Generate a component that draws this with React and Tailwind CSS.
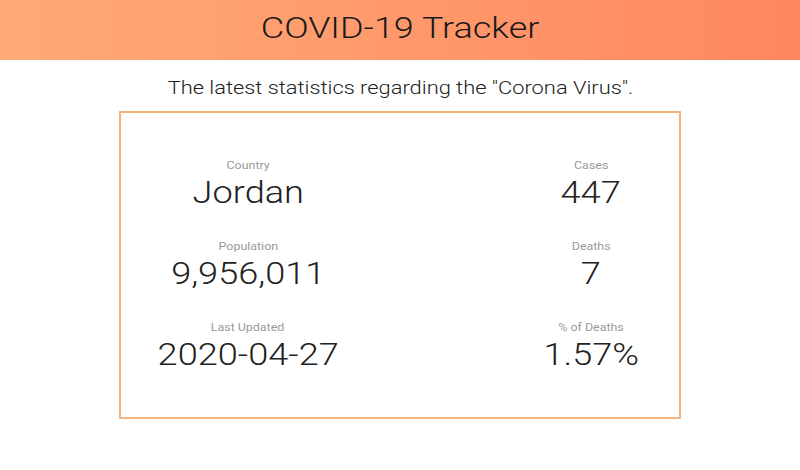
import React from "react";

const left = [
  { label: "Country", value: "Jordan" },
  { label: "Population", value: "9,956,011" },
  { label: "Last Updated", value: "2020-04-27" },
];

const right = [
  { label: "Cases", value: "447" },
  { label: "Deaths", value: "7" },
  { label: "% of Deaths", value: "1.57%" },
];

// the screenshot is a bit wider than the font, hence the scale-x
const Stat = ({ label, value }) => (
  <div className="flex flex-col items-center">
    <span className="text-[11px] leading-[14px] text-[#9a9a9a] scale-x-[1.13]">{label}</span>
    <span className="text-[32px] leading-[38px] font-light text-[#222] scale-x-[1.13] whitespace-nowrap">
      {value}
    </span>
  </div>
);

export default function App() {
  return (
    <div className="min-h-[470px] bg-white font-['Roboto',sans-serif] overflow-hidden">
      <header className="h-[60px] pb-[5px] flex items-center justify-center bg-gradient-to-r from-[#ffaa78] to-[#ff8760]">
        <h1 className="text-[30px] font-light text-[#1a1a1a] scale-x-[1.2]">COVID-19 Tracker</h1>
      </header>
      <div className="mt-[14px] flex justify-center">
        <p className="text-[19px] font-light text-[#222] scale-x-[1.15]">
          The latest statistics regarding the "Corona Virus".
        </p>
      </div>
      <div className="mx-auto mt-[8px] w-[562px] h-[308px] border-2 border-[#f5b37e] flex justify-between pl-[37px] pr-[38px] pt-[46px]">
        <div className="w-[180px] flex flex-col gap-[29px]">
          {left.map((s) => (
            <Stat key={s.label} {...s} />
          ))}
        </div>
        <div className="w-[100px] flex flex-col gap-[29px]">
          {right.map((s) => (
            <Stat key={s.label} {...s} />
          ))}
        </div>
      </div>
    </div>
  );
}
